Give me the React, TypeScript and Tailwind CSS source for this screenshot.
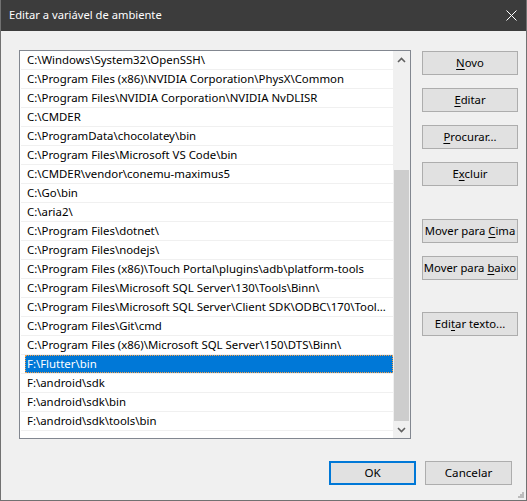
import React from "react";

const paths = [
  "C:\\Windows\\System32\\OpenSSH\\",
  "C:\\Program Files (x86)\\NVIDIA Corporation\\PhysX\\Common",
  "C:\\Program Files\\NVIDIA Corporation\\NVIDIA NvDLISR",
  "C:\\CMDER",
  "C:\\ProgramData\\chocolatey\\bin",
  "C:\\Program Files\\Microsoft VS Code\\bin",
  "C:\\CMDER\\vendor\\conemu-maximus5",
  "C:\\Go\\bin",
  "C:\\aria2\\",
  "C:\\Program Files\\dotnet\\",
  "C:\\Program Files\\nodejs\\",
  "C:\\Program Files (x86)\\Touch Portal\\plugins\\adb\\platform-tools",
  "C:\\Program Files\\Microsoft SQL Server\\130\\Tools\\Binn\\",
  "C:\\Program Files\\Microsoft SQL Server\\Client SDK\\ODBC\\170\\Tool...",
  "C:\\Program Files\\Git\\cmd",
  "C:\\Program Files (x86)\\Microsoft SQL Server\\150\\DTS\\Binn\\",
  "F:\\Flutter\\bin",
  "F:\\android\\sdk",
  "F:\\android\\sdk\\bin",
  "F:\\android\\sdk\\tools\\bin",
];

const SELECTED = 16;

function Btn({ children, className = "" }: { children: React.ReactNode; className?: string }) {
  return (
    <div
      className={
        "w-[96px] h-[24px] bg-[#e1e1e1] border border-[#adadad] flex items-center justify-center text-[11.3px] text-black whitespace-nowrap " +
        className
      }
    >
      <span>{children}</span>
    </div>
  );
}

export default function App() {
  return (
    <div
      className="w-[527px] h-[501px] bg-[#f0f0f0] border-x border-b border-[#717171] flex flex-col overflow-hidden"
      style={{ fontFamily: '"Noto Sans", "Liberation Sans", sans-serif' }}
    >
      {/* Title bar */}
      <div className="h-[31px] shrink-0 bg-[#3c3c3c] flex items-center justify-between pl-[8px] pr-[9px]">
        <span className="text-white text-[11.2px]">Editar a variável de ambiente</span>
        <svg width="11" height="11" viewBox="0 0 11 11">
          <path d="M0.5 0.5 L10.5 10.5 M10.5 0.5 L0.5 10.5" stroke="#ffffff" strokeWidth="1" />
        </svg>
      </div>

      <div className="flex pt-[19px] pl-[18px]">
        {/* List box */}
        <div className="w-[392px] h-[389px] bg-white border border-[#828790] flex">
          <div className="flex-1 min-w-0 flex flex-col">
            {paths.map((p, i) => (
              <div key={i} className="h-[19px] ml-[1px] border-b border-[#f0f0f0] flex min-w-0">
                <div
                  className={
                    "ml-[4px] flex-1 min-w-0 h-[18px] flex items-center pl-[2px] text-[11.4px] whitespace-nowrap overflow-hidden " +
                    (i === SELECTED
                      ? "bg-[#0078d7] text-white outline outline-1 outline-dotted outline-[#f4a04a] -outline-offset-1"
                      : "text-black")
                  }
                >
                  {p}
                </div>
              </div>
            ))}
          </div>
          {/* Scrollbar */}
          <div className="w-[17px] shrink-0 bg-[#f0f0f0] flex flex-col">
            <div className="h-[17px] flex items-center justify-center">
              <svg width="9" height="6" viewBox="0 0 9 6">
                <path d="M1 5 L4.5 1.5 L8 5" stroke="#606060" strokeWidth="1.6" fill="none" />
              </svg>
            </div>
            <div className="h-[102px]" />
            <div className="flex-1 mx-[1px] bg-[#cdcdcd]" />
            <div className="h-[17px] flex items-center justify-center">
              <svg width="9" height="6" viewBox="0 0 9 6">
                <path d="M1 1 L4.5 4.5 L8 1" stroke="#606060" strokeWidth="1.6" fill="none" />
              </svg>
            </div>
          </div>
        </div>

        {/* Side buttons */}
        <div className="ml-[11px] pt-[1px] flex flex-col">
          <Btn>
            <span className="underline underline-offset-2">N</span>ovo
          </Btn>
          <Btn className="mt-[13px]">
            <span className="underline underline-offset-2">E</span>ditar
          </Btn>
          <Btn className="mt-[13px]">
            <span className="underline underline-offset-2">P</span>rocurar...
          </Btn>
          <Btn className="mt-[13px]">
            E<span className="underline underline-offset-2">x</span>cluir
          </Btn>
          <Btn className="mt-[33px]">
            Mover para <span className="underline underline-offset-2">C</span>ima
          </Btn>
          <Btn className="mt-[13px]">
            Mover para <span className="underline underline-offset-2">b</span>aixo
          </Btn>
          <Btn className="mt-[32px]">
            Edi<span className="underline underline-offset-2">t</span>ar texto...
          </Btn>
        </div>
      </div>

      {/* Bottom buttons */}
      <div className="flex justify-end gap-[9px] pt-[22px] pr-[14px]">
        <div className="w-[87px] h-[24px] bg-[#e1e1e1] border-2 border-[#0078d7] flex items-center justify-center text-[11.6px] text-black">
          OK
        </div>
        <div className="w-[87px] h-[24px] bg-[#e1e1e1] border border-[#adadad] flex items-center justify-center text-[11.6px] text-black">
          Cancelar
        </div>
      </div>

      <div className="flex-1 flex items-end justify-end pr-[2px] pb-[2px]">
        <svg width="6" height="6" viewBox="0 0 6 6">
          <rect x="4" y="0" width="2" height="2" fill="#bcbcbc" />
          <rect x="2" y="2" width="2" height="2" fill="#bcbcbc" />
          <rect x="4" y="2" width="2" height="2" fill="#bcbcbc" />
          <rect x="0" y="4" width="2" height="2" fill="#bcbcbc" />
          <rect x="2" y="4" width="2" height="2" fill="#bcbcbc" />
          <rect x="4" y="4" width="2" height="2" fill="#bcbcbc" />
        </svg>
      </div>
    </div>
  );
}
